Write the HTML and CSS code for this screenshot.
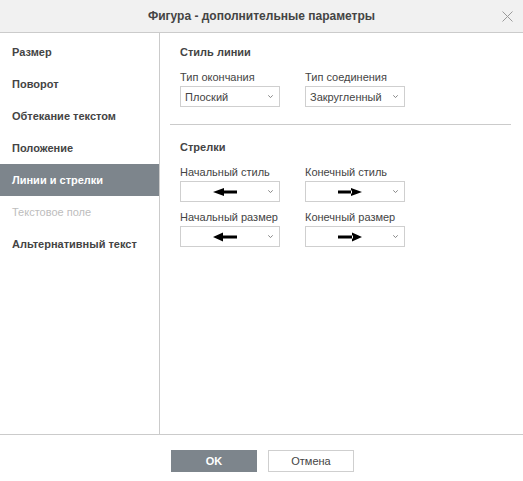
FILE: index.html
```html
<!DOCTYPE html>
<html>
    <head>
        <title>Фигура - дополнительные параметры</title>
        <link rel="stylesheet" href="styles.css">
    </head>
    <body>
        <div class="Dialog">
            <div class="Header">
                <span class="Title">Фигура - дополнительные параметры</span>
                <svg class="Close" width="11" height="11" viewBox="0 0 11 11"><path d="M0.5 0.5 L10.5 10.5 M10.5 0.5 L0.5 10.5" stroke="#9a9a9a" stroke-width="1" fill="none"/></svg>
            </div>

            <div class="Main">
                <ul class="Menu">
                    <li>Размер</li>
                    <li>Поворот</li>
                    <li>Обтекание текстом</li>
                    <li>Положение</li>
                    <li class="Active">Линии и стрелки</li>
                    <li class="Disabled">Текстовое поле</li>
                    <li>Альтернативный текст</li>
                </ul>

                <div class="Panel">
                    <h3>Стиль линии</h3>
                    <div class="Grid">
                        <div class="Field">
                            <label>Тип окончания</label>
                            <div class="Combo"><span class="Value">Плоский</span><svg class="Caret" width="5" height="3" viewBox="0 0 5 3"><path d="M0.3 0.3 L2.5 2.6 L4.7 0.3" stroke="#888" fill="none"/></svg></div>
                        </div>
                        <div class="Field">
                            <label>Тип соединения</label>
                            <div class="Combo"><span class="Value">Закругленный</span><svg class="Caret" width="5" height="3" viewBox="0 0 5 3"><path d="M0.3 0.3 L2.5 2.6 L4.7 0.3" stroke="#888" fill="none"/></svg></div>
                        </div>
                    </div>

                    <div class="Line"></div>

                    <h3>Стрелки</h3>
                    <div class="Grid">
                        <div class="Field">
                            <label>Начальный стиль</label>
                            <div class="Combo">
                                <span class="Arrow"><svg width="24" height="10" viewBox="0 0 24 10"><path d="M0 5 L11 1 L11 9 Z M10 3.5 L24 3.5 L24 6.5 L10 6.5 Z" fill="#000"/></svg></span>
                                <svg class="Caret" width="5" height="3" viewBox="0 0 5 3"><path d="M0.3 0.3 L2.5 2.6 L4.7 0.3" stroke="#888" fill="none"/></svg>
                            </div>
                        </div>
                        <div class="Field">
                            <label>Конечный стиль</label>
                            <div class="Combo">
                                <span class="Arrow"><svg width="24" height="10" viewBox="0 0 24 10"><path d="M24 5 L13 1 L13 9 Z M0 3.5 L14 3.5 L14 6.5 L0 6.5 Z" fill="#000"/></svg></span>
                                <svg class="Caret" width="5" height="3" viewBox="0 0 5 3"><path d="M0.3 0.3 L2.5 2.6 L4.7 0.3" stroke="#888" fill="none"/></svg>
                            </div>
                        </div>
                        <div class="Field">
                            <label>Начальный размер</label>
                            <div class="Combo">
                                <span class="Arrow"><svg width="24" height="10" viewBox="0 0 24 10"><path d="M0 5 L10 0.5 L10 9.5 Z M9 3.5 L24 3.5 L24 6.5 L9 6.5 Z" fill="#000"/></svg></span>
                                <svg class="Caret" width="5" height="3" viewBox="0 0 5 3"><path d="M0.3 0.3 L2.5 2.6 L4.7 0.3" stroke="#888" fill="none"/></svg>
                            </div>
                        </div>
                        <div class="Field">
                            <label>Конечный размер</label>
                            <div class="Combo">
                                <span class="Arrow"><svg width="24" height="10" viewBox="0 0 24 10"><path d="M24 5 L14 0.5 L14 9.5 Z M0 3.5 L15 3.5 L15 6.5 L0 6.5 Z" fill="#000"/></svg></span>
                                <svg class="Caret" width="5" height="3" viewBox="0 0 5 3"><path d="M0.3 0.3 L2.5 2.6 L4.7 0.3" stroke="#888" fill="none"/></svg>
                            </div>
                        </div>
                    </div>
                </div>
            </div>

            <div class="Footer">
                <button class="Btn Primary">OK</button>
                <button class="Btn">Отмена</button>
            </div>
        </div>
    </body>
</html>
```

FILE: styles.css
```css
body {
    margin: 0;
    font-family: "Liberation Sans", Arial, sans-serif;
    font-size: 11px;
    color: #444;
    background-color: #fff;
}
.Dialog {
    width: 523px;
    height: 481px;
    display: flex;
    flex-direction: column;
}
.Header {
    height: 32px;
    background-color: #f1f1f1;
    border-bottom: 1px solid #cbcbcb;
    display: flex;
    align-items: center;
    justify-content: center;
    position: relative;
}
.Title {
    font-size: 12px;
    font-weight: bold;
    color: #444;
}
/* sits over the header bar */
.Close {
    position: absolute;
    right: 10px;
    top: 11px;
}
.Main {
    height: 401px;
    border-bottom: 1px solid #cbcbcb;
    display: flex;
}
.Menu {
    list-style-type: none;
    margin: 0;
    padding: 3px 0 0 0;
    width: 159px;
    border-right: 1px solid #cbcbcb;
}
.Menu li {
    height: 32px;
    line-height: 32px;
    padding-left: 12px;
    font-weight: bold;
    color: #444;
}
.Menu li.Active {
    background-color: #7d858c;
    color: #fff;
}
.Menu li.Disabled {
    color: #bdbdbd;
    font-weight: normal;
}
.Panel {
    flex: 1;
    padding: 12px 12px 0 20px;
}
h3 {
    margin: 0 0 11px 0;
    font-size: 11px;
    line-height: 14px;
    font-weight: bold;
    color: #444;
}
.Grid {
    display: grid;
    grid-template-columns: 100px 100px;
    column-gap: 25px;
    row-gap: 8px;
}
.Field label {
    display: block;
    line-height: 14px;
    margin-bottom: 2px;
    white-space: nowrap;
}
.Combo {
    box-sizing: border-box;
    height: 21px;
    border: 1px solid #cfcfcf;
    display: flex;
    align-items: center;
    padding: 0 6px 0 4px;
}
.Value {
    flex: 1;
    color: #444;
}
.Arrow {
    flex: 1;
    display: flex;
    justify-content: center;
    padding-right: 3px;
}
.Arrow svg {
    display: block;
}
.Caret {
    display: block;
}
.Line {
    height: 1px;
    background-color: #cbcbcb;
    margin: 17px 0 15px -10px;
}
.Footer {
    flex: 1;
    display: flex;
    justify-content: center;
    align-items: flex-start;
    padding-top: 15px;
    padding-left: 2px;
    gap: 11px;
}
.Btn {
    width: 86px;
    height: 22px;
    font-family: "Liberation Sans", Arial, sans-serif;
    font-size: 11px;
    color: #444;
    background-color: #fff;
    border: 1px solid #cfcfcf;
    padding: 0;
}
.Primary {
    background-color: #7d858c;
    border-color: #7d858c;
    color: #fff;
    font-weight: bold;
}
```
